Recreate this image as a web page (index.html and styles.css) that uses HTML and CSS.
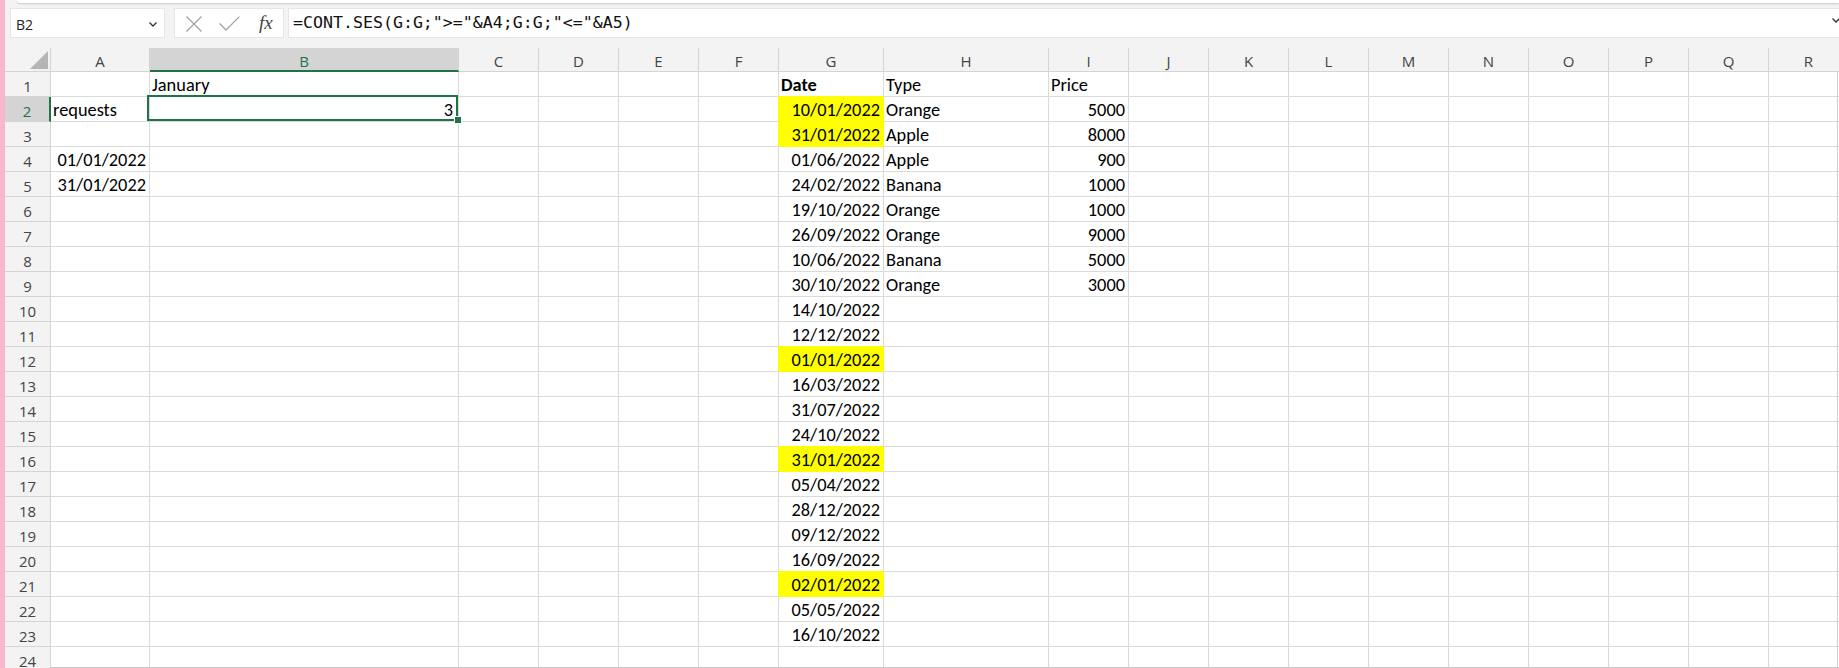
FILE: index.html
```html
<!DOCTYPE html>
<html lang="en">
<head>
<meta charset="utf-8">
<title>Excel - CONT.SES</title>
<link rel="stylesheet" href="styles.css">
</head>
<body>
<div class="app">
  <div class="pink"></div>
  <div class="main">
    <div class="top">
      <div class="card"></div>
      <div class="fbar">
        <div class="namebox">
          <span>B2</span>
          <svg class="chev" width="8" height="5" viewBox="0 0 8 5"><polyline points="0.5,0.5 4,4 7.5,0.5" fill="none" stroke="#333" stroke-width="1.3"/></svg>
        </div>
        <div class="btns">
          <svg class="ico-x" width="16" height="16" viewBox="0 0 16 16"><path d="M0.5 0.5 L15.5 15.5 M15.5 0.5 L0.5 15.5" stroke="#a3a3a3" stroke-width="1.3" fill="none"/></svg>
          <svg class="ico-ok" width="21" height="15" viewBox="0 0 21 15"><polyline points="0.6,7.5 7,14 20.4,0.6" stroke="#a3a3a3" stroke-width="1.3" fill="none"/></svg>
          <i class="fx">fx</i>
        </div>
        <div class="formula">
          <span class="ftext">=CONT.SES(G:G;"&gt;="&amp;A4;G:G;"&lt;="&amp;A5)</span>
          <svg class="chev" width="8" height="5" viewBox="0 0 8 5"><polyline points="0.5,0.5 4,4 7.5,0.5" fill="none" stroke="#333" stroke-width="1.3"/></svg>
        </div>
      </div>
    </div>

    <div class="sheet">
      <div class="corner"><svg width="18" height="18" viewBox="0 0 18 18"><polygon points="18,0 18,18 0,18" fill="#b5b5b5"/></svg></div>
      <div class="ch">A</div><div class="ch sel">B</div><div class="ch">C</div><div class="ch">D</div><div class="ch">E</div><div class="ch">F</div><div class="ch">G</div><div class="ch">H</div><div class="ch">I</div><div class="ch">J</div><div class="ch">K</div><div class="ch">L</div><div class="ch">M</div><div class="ch">N</div><div class="ch">O</div><div class="ch">P</div><div class="ch">Q</div><div class="ch">R</div>

      <div class="rh">1</div><div></div><div>January</div><div></div><div></div><div></div><div></div><div class="b">Date</div><div>Type</div><div>Price</div><div></div><div></div><div></div><div></div><div></div><div></div><div></div><div></div><div></div>

      <div class="rh sel">2</div><div>requests</div><div class="r cur">3<span class="selbox"></span><span class="handle"></span></div><div></div><div></div><div></div><div></div><div class="r y">10/01/2022</div><div>Orange</div><div class="r">5000</div><div></div><div></div><div></div><div></div><div></div><div></div><div></div><div></div><div></div>

      <div class="rh">3</div><div></div><div></div><div></div><div></div><div></div><div></div><div class="r y">31/01/2022</div><div>Apple</div><div class="r">8000</div><div></div><div></div><div></div><div></div><div></div><div></div><div></div><div></div><div></div>

      <div class="rh">4</div><div class="r">01/01/2022</div><div></div><div></div><div></div><div></div><div></div><div class="r">01/06/2022</div><div>Apple</div><div class="r">900</div><div></div><div></div><div></div><div></div><div></div><div></div><div></div><div></div><div></div>

      <div class="rh">5</div><div class="r">31/01/2022</div><div></div><div></div><div></div><div></div><div></div><div class="r">24/02/2022</div><div>Banana</div><div class="r">1000</div><div></div><div></div><div></div><div></div><div></div><div></div><div></div><div></div><div></div>

      <div class="rh">6</div><div></div><div></div><div></div><div></div><div></div><div></div><div class="r">19/10/2022</div><div>Orange</div><div class="r">1000</div><div></div><div></div><div></div><div></div><div></div><div></div><div></div><div></div><div></div>

      <div class="rh">7</div><div></div><div></div><div></div><div></div><div></div><div></div><div class="r">26/09/2022</div><div>Orange</div><div class="r">9000</div><div></div><div></div><div></div><div></div><div></div><div></div><div></div><div></div><div></div>

      <div class="rh">8</div><div></div><div></div><div></div><div></div><div></div><div></div><div class="r">10/06/2022</div><div>Banana</div><div class="r">5000</div><div></div><div></div><div></div><div></div><div></div><div></div><div></div><div></div><div></div>

      <div class="rh">9</div><div></div><div></div><div></div><div></div><div></div><div></div><div class="r">30/10/2022</div><div>Orange</div><div class="r">3000</div><div></div><div></div><div></div><div></div><div></div><div></div><div></div><div></div><div></div>

      <div class="rh">10</div><div></div><div></div><div></div><div></div><div></div><div></div><div class="r">14/10/2022</div><div></div><div></div><div></div><div></div><div></div><div></div><div></div><div></div><div></div><div></div><div></div>

      <div class="rh">11</div><div></div><div></div><div></div><div></div><div></div><div></div><div class="r">12/12/2022</div><div></div><div></div><div></div><div></div><div></div><div></div><div></div><div></div><div></div><div></div><div></div>

      <div class="rh">12</div><div></div><div></div><div></div><div></div><div></div><div></div><div class="r y">01/01/2022</div><div></div><div></div><div></div><div></div><div></div><div></div><div></div><div></div><div></div><div></div><div></div>

      <div class="rh">13</div><div></div><div></div><div></div><div></div><div></div><div></div><div class="r">16/03/2022</div><div></div><div></div><div></div><div></div><div></div><div></div><div></div><div></div><div></div><div></div><div></div>

      <div class="rh">14</div><div></div><div></div><div></div><div></div><div></div><div></div><div class="r">31/07/2022</div><div></div><div></div><div></div><div></div><div></div><div></div><div></div><div></div><div></div><div></div><div></div>

      <div class="rh">15</div><div></div><div></div><div></div><div></div><div></div><div></div><div class="r">24/10/2022</div><div></div><div></div><div></div><div></div><div></div><div></div><div></div><div></div><div></div><div></div><div></div>

      <div class="rh">16</div><div></div><div></div><div></div><div></div><div></div><div></div><div class="r y">31/01/2022</div><div></div><div></div><div></div><div></div><div></div><div></div><div></div><div></div><div></div><div></div><div></div>

      <div class="rh">17</div><div></div><div></div><div></div><div></div><div></div><div></div><div class="r">05/04/2022</div><div></div><div></div><div></div><div></div><div></div><div></div><div></div><div></div><div></div><div></div><div></div>

      <div class="rh">18</div><div></div><div></div><div></div><div></div><div></div><div></div><div class="r">28/12/2022</div><div></div><div></div><div></div><div></div><div></div><div></div><div></div><div></div><div></div><div></div><div></div>

      <div class="rh">19</div><div></div><div></div><div></div><div></div><div></div><div></div><div class="r">09/12/2022</div><div></div><div></div><div></div><div></div><div></div><div></div><div></div><div></div><div></div><div></div><div></div>

      <div class="rh">20</div><div></div><div></div><div></div><div></div><div></div><div></div><div class="r">16/09/2022</div><div></div><div></div><div></div><div></div><div></div><div></div><div></div><div></div><div></div><div></div><div></div>

      <div class="rh">21</div><div></div><div></div><div></div><div></div><div></div><div></div><div class="r y">02/01/2022</div><div></div><div></div><div></div><div></div><div></div><div></div><div></div><div></div><div></div><div></div><div></div>

      <div class="rh">22</div><div></div><div></div><div></div><div></div><div></div><div></div><div class="r">05/05/2022</div><div></div><div></div><div></div><div></div><div></div><div></div><div></div><div></div><div></div><div></div><div></div>

      <div class="rh">23</div><div></div><div></div><div></div><div></div><div></div><div></div><div class="r">16/10/2022</div><div></div><div></div><div></div><div></div><div></div><div></div><div></div><div></div><div></div><div></div><div></div>

      <div class="rh">24</div><div></div><div></div><div></div><div></div><div></div><div></div><div></div><div></div><div></div><div></div><div></div><div></div><div></div><div></div><div></div><div></div><div></div>

      <span class="vedge"></span>
    </div>
    <div class="hbar"></div>
  </div>
</div>
</body>
</html>
```

FILE: styles.css
```css
* { box-sizing: border-box; margin: 0; padding: 0; }
html, body { width: 100%; height: 100%; overflow: hidden; background: #fff; }

.app { display: flex; width: 1839px; height: 668px; overflow: hidden; }
.pink { width: 5px; flex: none; background: #f7b7cd; }
.main { flex: 1; min-width: 0; display: flex; flex-direction: column; overflow: hidden; background: #f3f3f3; }

/* ---------- top / formula bar ---------- */
.top { height: 48px; flex: none; display: flex; flex-direction: column; }
.card { height: 3px; margin-left: 12px; background: #fff; border-bottom-left-radius: 8px; box-shadow: 0 1px 2px rgba(0, 0, 0, 0.18); }
.fbar { display: flex; height: 30px; margin-top: 5px; padding-left: 5px; }

.namebox {
  width: 155px; flex: none; background: #fff; border: 1px solid #e6e6e6;
  display: flex; align-items: center; justify-content: space-between;
  padding: 3px 7px 0 5px;
  font: 14px "Segoe UI", "Open Sans", sans-serif; color: #222;
}
.namebox .chev { margin-top: -1px; }

.btns {
  width: 110px; flex: none; margin-left: 9px; background: #fff; border: 1px solid #e6e6e6;
  display: flex; align-items: center; padding-left: 11px;
}
.ico-x { margin-top: 1px; }
.ico-ok { margin-left: 17px; margin-top: 1px; }
.fx { margin-left: 19px; font: italic 19px "Liberation Serif", serif; color: #444; margin-top: -1px; }

.formula {
  flex: 1; min-width: 0; margin-left: 4px; margin-right: -2px; background: #fff; border: 1px solid #e6e6e6;
  display: flex; align-items: center; justify-content: space-between; padding: 0 0 0 4px;
}
.ftext { font: 16.6px "DejaVu Sans Mono", "Liberation Mono", monospace; color: #111; white-space: pre; margin-top: -2px; }
.formula .chev { margin-right: 0; margin-top: -5px; }

/* ---------- sheet grid ---------- */
.sheet {
  flex: none; height: 619px; position: relative; overflow: hidden;
  display: grid;
  grid-template-columns: 46px 99px 309px 80px 80px 80px 80px 105px 165px repeat(10, 80px);
  grid-template-rows: 24px;
  grid-auto-rows: 25px;
  background: #fff;
}
.sheet > div {
  border-right: 1px solid #dadada; border-bottom: 1px solid #dadada;
  background: #fff;
  display: flex; align-items: flex-end; justify-content: flex-start;
  padding: 0 3px 0 2px;
  font: 18.33px "Carlito", "Calibri", "Liberation Sans", sans-serif; line-height: 22px; color: #000;
  white-space: nowrap;
}
.sheet > div.r { justify-content: flex-end; }
.sheet > div.b { font-weight: bold; }
.sheet > div.y { background: #ffff00; border-color: #ffff00; box-shadow: -1px -1px 0 #ffff00; }

.sheet > div.corner { background: #f3f3f3; border-color: #d4d4d4; justify-content: flex-end; padding: 0 2px 2px 0; }
.sheet > div.ch {
  background: #f3f3f3; border-color: #d4d4d4; justify-content: center; align-items: center; padding: 2px 0 0 0;
  font: 15px "Segoe UI", "Open Sans", sans-serif; color: #444;
}
.sheet > div.ch.sel { background: #d4d4d4; color: #217346; border-bottom: 2px solid #217346; padding-top: 3px; }
.sheet > div.rh {
  background: #f3f3f3; border-color: #d4d4d4; justify-content: center; padding: 0;
  font: 15px "Segoe UI", "Open Sans", sans-serif; line-height: 20px; color: #444;
}
.sheet > div.rh.sel { background: #d4d4d4; color: #217346; border-right: 2px solid #217346; }

.sheet > div.cur { position: relative; z-index: 2; padding-right: 5px; }
.selbox { position: absolute; left: -3px; top: -2px; right: 0; bottom: 0; border: 2px solid #217346; }
.handle { position: absolute; right: -3px; bottom: -2px; width: 6px; height: 6px; background: #217346; outline: 1px solid #fff; }

.vedge { position: absolute; right: 1px; top: 23px; bottom: 0; width: 1px; background: #d0d0d0; }

.hbar { height: 1px; flex: none; margin-left: 45px; background: #c8c8c8; }
```
